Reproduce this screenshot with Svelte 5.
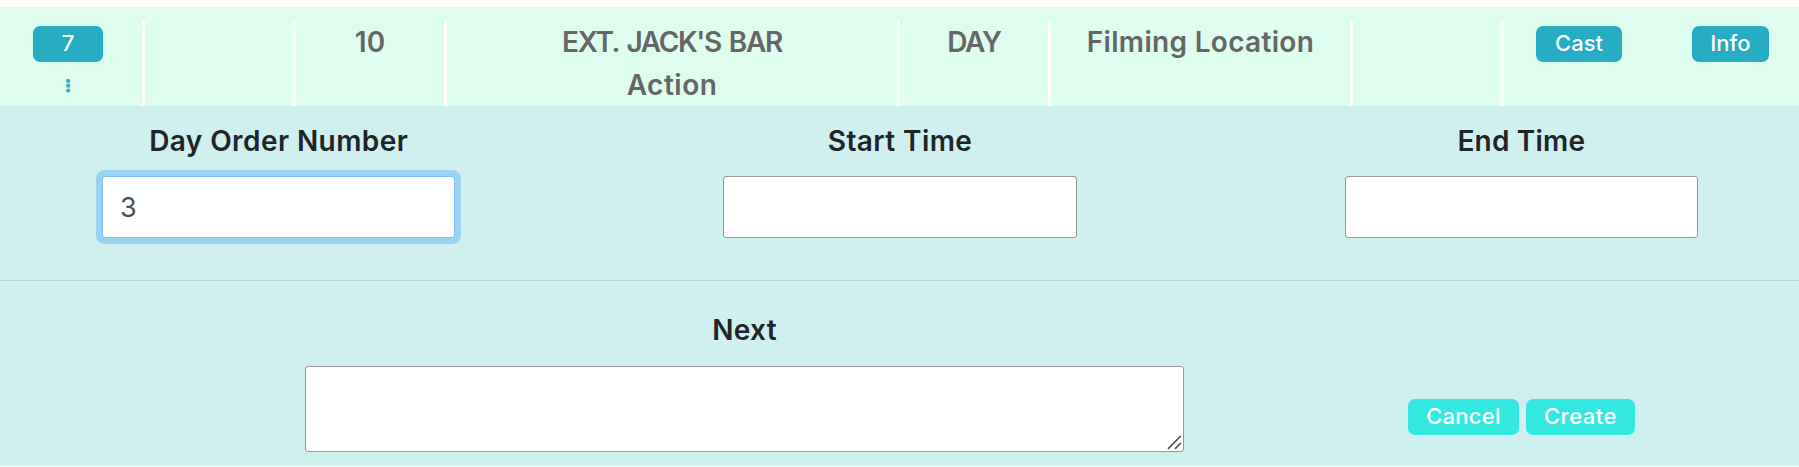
<script>
  const cells = [
    { span: 1, lines: [] },
    { span: 1, lines: [{ text: '10', track: 0 }] },
    { span: 3, lines: [{ text: "EXT. JACK'S BAR", track: -1.35, gap: 2.2 }, { text: 'Action', track: 0.5 }] },
    { span: 1, lines: [{ text: 'DAY', track: -1.2 }] },
    { span: 2, lines: [{ text: 'Filming Location', track: 0.32 }] },
    { span: 1, lines: [] }
  ];
  const fields = [
    { label: 'Day Order Number', value: '3', track: 0.42 },
    { label: 'Start Time', value: '', track: 0.4 },
    { label: 'End Time', value: '', track: 0.2 }
  ];
</script>

<div class="page">
  <div class="scene">
    <div class="cell order">
      <button class="btn number">7</button>
      <svg class="dots" width="6" height="16" viewBox="0 0 6 16">
        <circle cx="3.2" cy="2.9" r="2.1" />
        <circle cx="3.2" cy="7.7" r="2.1" />
        <circle cx="3.2" cy="12.5" r="2.1" />
      </svg>
    </div>
    {#each cells as cell}
      <div class="cell" style="grid-column: span {cell.span}">
        {#each cell.lines as line}
          <div style="letter-spacing: {line.track}px; word-spacing: {line.gap ?? 0}px">{line.text}</div>
        {/each}
      </div>
    {/each}
    <div class="cell plain"><button class="btn cast">Cast</button></div>
    <div class="cell plain"><button class="btn info">Info</button></div>
  </div>

  <div class="panel">
    <div class="fields">
      {#each fields as field, i}
        <label class="field">
          <span style="letter-spacing: {field.track}px">{field.label}</span>
          <input class:active={i === 0} value={field.value} />
        </label>
      {/each}
    </div>
    <div class="bottom">
      <label class="next">
        <span>Next</span>
        <div class="area">
          <textarea></textarea>
          <svg class="grip" width="15" height="15" viewBox="0 0 15 15">
            <path d="M1 13.8 13.8 1M8 13.8l5.8-5.8" />
          </svg>
        </div>
      </label>
      <div class="actions">
        <button class="btn cancel">Cancel</button>
        <button class="btn create">Create</button>
      </div>
    </div>
  </div>
</div>

<style>
  :global(body) { background: #fff; }
  .page {
    box-sizing: border-box;
    width: 1799px;
    height: 467px;
    padding-top: 7px;
    overflow: hidden;
    background: linear-gradient(#fffff5 7px, #f4fcfb 7px);
    font-family: "Inter", sans-serif;
    color: #212529;
  }
  .page * { box-sizing: border-box; }
  .scene {
    display: grid;
    grid-template-columns: repeat(12, 151px);
    grid-template-rows: 85px;
    height: 99px;
    margin-left: -6px;
    width: 1812px;
    padding-top: 14px;
    background: #dffdee;
  }
  .cell {
    border-right: 3px solid #fff;
    text-align: center;
    font-size: 28px;
    font-weight: 600;
    line-height: 43px;
    color: #666;
    white-space: nowrap;
    min-width: 0;
  }
  .order, .plain { display: flex; flex-direction: column; align-items: center; padding-top: 5px; }
  .plain { border: 0; }
  .dots { flex-shrink: 0; margin-top: 16px; fill: #2bb5b8; }
  .btn {
    flex-shrink: 0;
    height: 36px;
    padding: 0 0 2px;
    border: 0;
    border-radius: 7px;
    background: #26adc4;
    color: #fff;
    font: 500 22px/34px "Inter", sans-serif;
    text-align: center;
  }
  .number { width: 70px; }
  .cast { width: 86px; margin-right: 1px; }
  .info { width: 77px; }
  .panel { height: 360px; background: #d0f0ef; }
  .fields {
    display: grid;
    grid-template-columns: repeat(3, 621.33px);
    margin-left: -32px;
    width: 1864px;
    height: 175px;
    padding-top: 14px;
    border-bottom: 1px solid #b9d9d8;
  }
  .field, .next {
    display: flex;
    flex-direction: column;
    align-items: center;
    font-size: 28px;
    font-weight: 600;
    line-height: 43px;
  }
  input, textarea {
    display: block;
    border: 1px solid #999;
    border-radius: 3px;
    background: #fff;
    outline: 0;
    margin: 0;
  }
  input {
    width: 353.4px;
    height: 62px;
    margin-top: 13px;
    padding: 0 0 0 17px;
    font: 400 27px "Inter", sans-serif;
    color: #495057;
  }
  input.active { border-color: #80bdff; box-shadow: 0 0 0 6px rgba(0, 123, 255, 0.25); }
  .bottom { display: flex; padding: 28px 0 0 305px; }
  .next { width: 879px; letter-spacing: 0.3px; }
  .area { position: relative; margin-top: 14px; }
  textarea { width: 879px; height: 86px; resize: none; }
  .grip { position: absolute; right: 2px; bottom: 2px; fill: none; stroke: #555; stroke-width: 1.7; }
  .actions { display: flex; gap: 7px; margin: 90px 0 0 224px; }
  .actions .btn { background: #34e8e2; }
  .cancel { width: 111px; letter-spacing: 0.25px; }
  .create { width: 109px; letter-spacing: 0.5px; }
</style>
